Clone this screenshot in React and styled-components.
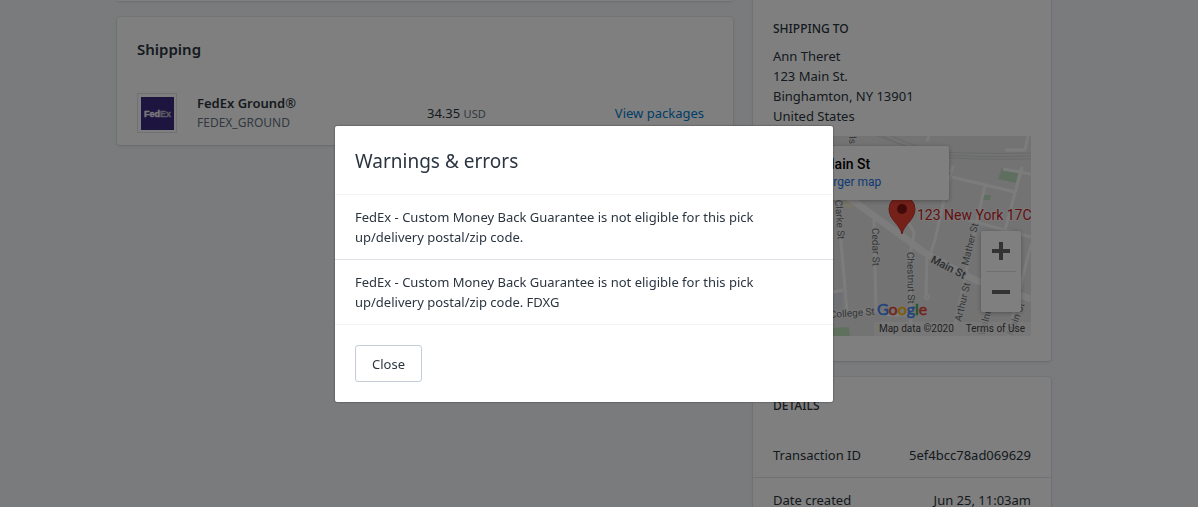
import React, { useState } from "react";
import styled, { createGlobalStyle, ThemeProvider } from "styled-components";

const theme = {
  fonts: {
    base: `"Noto Sans", "Open Sans", sans-serif`,
    map: `Roboto, "Liberation Sans", sans-serif`,
  },
  colors: {
    ink: "#2b3540",
    subdued: "#637381",
    border: "#dfe3e8",
    lightBorder: "#f1f3f6",
    page: "#f4f6f8",
    link: "#007ace",
  },
};

const warnings = [
  "FedEx - Custom Money Back Guarantee is not eligible for this pick up/delivery postal/zip code.",
  "FedEx - Custom Money Back Guarantee is not eligible for this pick up/delivery postal/zip code. FDXG",
];

const address = [
  "Ann Theret",
  "123 Main St.",
  "Binghamton, NY 13901",
  "United States",
];

const details = [
  { label: "Transaction ID", value: "5ef4bcc78ad069629" },
  { label: "Date created", value: "Jun 25, 11:03am" },
];

const roads = [
  "M62 44 L67 94 L74 176",
  "M101 82 L103 174",
  "M60 178 L102 174 Q112 182 139 178",
  "M60 156 L70 154",
  "M135 68 L135 86 L141 96 L140 106 L137 118 L138 200",
  "M180 30 L175 46 L162 104 L158 116",
  "M154 120 L153 158",
  "M179 41 L242 56",
  "M212 49 L202 94 L182 190",
  "M249 31 L232 94 L212 180",
  "M230 33 L258 38",
  "M195 84 L258 101",
  "M232 14 L252 14 L255 0",
  "M154 5 L156 0",
  "M258 108 L249 144 L235 200",
];

const streets = [
  { name: "Mills", x: 75, y: -13, angle: 86 },
  { name: "Center", x: 147, y: 43, angle: 0 },
  { name: "Clarke St", x: 62, y: 64, angle: 86 },
  { name: "Cedar St", x: 99, y: 92, angle: 89 },
  { name: "Chestnut St", x: 134, y: 116, angle: 89 },
  { name: "Mather St", x: 195, y: 130, angle: -76 },
  { name: "Arthur St", x: 188, y: 186, angle: -76 },
  { name: "College St", x: 57, y: 182, angle: -4 },
  { name: "Walnut St", x: 212, y: 200, angle: -76 },
  { name: "Main St", x: 240, y: 200, angle: -70 },
];

const StreetMap = () => (
  <MapFrame>
    <MapDrawing viewBox="0 0 258 200" preserveAspectRatio="xMinYMin slice">
      <rect width="258" height="200" fill="#e6e6e6" />
      <path d="M229 32 L245 36 L243 47 L225 43Z" fill="#bcdfbf" />
      <path d="M210 59 h8 l-1 5 h-8Z" fill="#bcdfbf" />
      <path d="M60 192 L76 191 L77 200 L60 200Z" fill="#bfe3bd" />
      <path d="M60 157 H69 V173 H60Z" fill="#dde0e6" />
      <path d="M72 62 L81 67 L78 74 L71 70Z" fill="#f3ebd0" />
      <g fill="none" stroke="#d2d4d6" strokeWidth="1">
        <path d="M100 -2 Q140 14 165 18 Q200 22 258 20" />
        <path d="M106 -2 Q142 17 165 21 Q200 24 258 23" />
        <path d="M114 -2 Q146 13 168 16 Q200 18 258 17" />
      </g>
      <g fill="none" stroke="#f9f9f9" strokeWidth="3" strokeLinejoin="round">
        {roads.map((d) => (
          <path key={d} d={d} />
        ))}
        <path
          d="M52 45 L75 61 L129 100 L152 117 L202 144 L258 163"
          strokeWidth="7"
        />
        <circle cx="154" cy="161" r="2" strokeWidth="2" fill="#e6e6e6" />
      </g>
      <g
        fontSize="10"
        fill="#6b6f73"
        stroke="#eeeeee"
        strokeWidth="2"
        paintOrder="stroke"
      >
        {streets.map(({ name, x, y, angle }) => (
          <text key={name} transform={`translate(${x} ${y}) rotate(${angle})`}>
            {name}
          </text>
        ))}
        <text
          transform="translate(157 126) rotate(27)"
          fontSize="11"
          fontWeight="500"
          fill="#5a5e62"
        >
          Main St
        </text>
      </g>
      <path
        d="M129 98 C127 88 116 84 116 73 A13 13 0 0 1 142 73 C142 84 131 88 129 98Z"
        fill="#ea4335"
        stroke="#c5362a"
      />
      <circle cx="129" cy="73" r="5" fill="#811411" />
      <text
        x="144"
        y="84"
        fontSize="14"
        fill="#c5221f"
        stroke="#f2f2f2"
        strokeWidth="2"
        paintOrder="stroke"
      >
        123 New York 17C
      </text>
      <text x="104" y="179" fontFamily="Lato" fontSize="16" strokeWidth="0.5">
        <tspan fill="#4285f4" stroke="#4285f4">G</tspan>
        <tspan fill="#ea4335" stroke="#ea4335">o</tspan>
        <tspan fill="#fbbc05" stroke="#fbbc05">o</tspan>
        <tspan fill="#4285f4" stroke="#4285f4">g</tspan>
        <tspan fill="#34a853" stroke="#34a853">l</tspan>
        <tspan fill="#ea4335" stroke="#ea4335">e</tspan>
      </text>
    </MapDrawing>
    <PlaceCard>
      <PlaceName>123 Main St</PlaceName>
      <PlaceLink href="#map">View larger map</PlaceLink>
    </PlaceCard>
    <ZoomControls>
      <ZoomButton aria-label="Zoom in">
        <svg width="18" height="18" viewBox="0 0 18 18">
          <path d="M0 9 H18 M9 0 V18" stroke="#666" strokeWidth="4" />
        </svg>
      </ZoomButton>
      <ZoomDivider />
      <ZoomButton aria-label="Zoom out">
        <svg width="18" height="18" viewBox="0 0 18 18">
          <path d="M0 9 H18" stroke="#666" strokeWidth="4" />
        </svg>
      </ZoomButton>
    </ZoomControls>
    <Attribution>
      <span>Map data ©2020</span>
      <a href="#terms">Terms of Use</a>
    </Attribution>
  </MapFrame>
);

const App = () => {
  const [open, setOpen] = useState(true);

  return (
    <ThemeProvider theme={theme}>
      <GlobalStyle />
      <Page>
        <Columns>
          <Primary>
            <Card $continued />
            <Card>
              <CardTitle>Shipping</CardTitle>
              <Shipment>
                <CarrierLogo>
                  <svg width="34" height="34" viewBox="0 0 34 34">
                    <rect x="1" y="1" width="33" height="33" fill="#3d2880" />
                    <text
                      x="4"
                      y="21"
                      fontFamily="Liberation Sans"
                      fontWeight="700"
                      fontSize="9"
                      fill="#f4f1f8"
                      stroke="#f4f1f8"
                      strokeWidth="0.4"
                    >
                      Fed
                      <tspan fill="#b9b4c4" stroke="#b9b4c4">
                        Ex
                      </tspan>
                    </text>
                  </svg>
                </CarrierLogo>
                <Service>
                  <ServiceName>FedEx Ground®</ServiceName>
                  <ServiceCode>FEDEX_GROUND</ServiceCode>
                </Service>
                <Price>
                  34.35 <small>USD</small>
                </Price>
                <PackagesLink href="#packages">View packages</PackagesLink>
              </Shipment>
            </Card>
          </Primary>
          <Secondary>
            <Card $continued>
              <AddressSection>
                <Subheading>Shipping to</Subheading>
                <Address>
                  {address.map((line) => (
                    <div key={line}>{line}</div>
                  ))}
                </Address>
                <StreetMap />
              </AddressSection>
            </Card>
            <Card>
              <DetailsHeader>
                <Subheading>Details</Subheading>
              </DetailsHeader>
              <DetailList>
                {details.map(({ label, value }) => (
                  <DetailRow key={label}>
                    <dt>{label}</dt>
                    <dd>{value}</dd>
                  </DetailRow>
                ))}
              </DetailList>
            </Card>
          </Secondary>
        </Columns>
      </Page>
      {open && (
        <Backdrop>
          <Modal role="dialog" aria-modal="true" aria-labelledby="modal-title">
            <ModalHeader>
              <ModalTitle id="modal-title">Warnings &amp; errors</ModalTitle>
            </ModalHeader>
            <WarningList>
              {warnings.map((text) => (
                <Warning key={text}>{text}</Warning>
              ))}
            </WarningList>
            <ModalFooter>
              <CloseButton onClick={() => setOpen(false)}>Close</CloseButton>
            </ModalFooter>
          </Modal>
        </Backdrop>
      )}
    </ThemeProvider>
  );
};

export default App;

const GlobalStyle = createGlobalStyle`
  * {
    box-sizing: border-box;
  }
  body {
    margin: 0;
    overflow: hidden;
    color: ${({ theme }) => theme.colors.ink};
    background-color: ${({ theme }) => theme.colors.page};
    font-family: ${({ theme }) => theme.fonts.base};
    font-size: 13px;
    line-height: 20px;
  }
  h1, h2, h3, ul, dl, dd {
    margin: 0;
    padding: 0;
  }
`;

const Page = styled.main`
  height: 100vh;
  padding-right: 30px;
  overflow: hidden;
`;

const Columns = styled.div`
  max-width: 934px;
  margin: 0 auto;
  display: flex;
  align-items: flex-start;
  gap: 20px;
`;

const Primary = styled.div`
  flex: 1;
  display: flex;
  flex-direction: column;
  gap: 16px;
`;

const Secondary = styled.div`
  flex: 0 0 298px;
  display: flex;
  flex-direction: column;
  gap: 16px;
`;

const Card = styled.section`
  min-height: 1px;
  background-color: white;
  border-radius: ${({ $continued }) => ($continued ? "0 0 3px 3px" : "3px")};
  box-shadow: 0 0 0 1px rgba(63, 63, 68, 0.05),
    0 1px 3px 0 rgba(63, 63, 68, 0.15);
`;

const CardTitle = styled.h2`
  padding: 20px 20px 0;
  font-size: 15px;
  font-weight: 600;
  line-height: 24px;
`;

const Shipment = styled.div`
  padding: 32px 29px 12px 20px;
  display: grid;
  grid-template-columns: 40px 210px 1fr auto;
  column-gap: 20px;
  align-items: center;
`;

const CarrierLogo = styled.div`
  height: 40px;
  display: flex;
  align-items: center;
  justify-content: center;
  border: 1px solid ${({ theme }) => theme.colors.border};
`;

const Service = styled.div`
  display: flex;
  flex-direction: column;
`;

const ServiceName = styled.span`
  font-weight: 600;
`;

const ServiceCode = styled.span`
  color: ${({ theme }) => theme.colors.subdued};
  font-size: 12px;
`;

const Price = styled.div`
  small {
    color: ${({ theme }) => theme.colors.subdued};
    font-size: 11px;
  }
`;

const PackagesLink = styled.a`
  color: ${({ theme }) => theme.colors.link};
  text-decoration: none;
`;

const AddressSection = styled.div`
  padding: 20px 20px 25px;
`;

const Subheading = styled.h3`
  font-size: 12px;
  font-weight: 500;
  line-height: 18px;
  text-transform: uppercase;
`;

const Address = styled.div`
  padding: 8px 0 10px;
`;

const MapFrame = styled.div`
  position: relative;
  height: 200px;
  overflow: hidden;
  font-family: ${({ theme }) => theme.fonts.map};
`;

const MapDrawing = styled.svg`
  display: block;
  width: 100%;
  height: 100%;
`;

const PlaceCard = styled.div`
  position: absolute;
  top: 10px;
  left: 10px;
  width: 166px;
  padding: 9px 12px;
  display: flex;
  flex-direction: column;
  line-height: 18px;
  background-color: white;
  border-radius: 2px;
  box-shadow: 0 1px 4px rgba(0, 0, 0, 0.3);
`;

const PlaceName = styled.span`
  color: black;
  font-size: 14px;
  font-weight: 500;
`;

const PlaceLink = styled.a`
  color: #1a73e8;
  font-size: 12px;
  text-decoration: none;
`;

const ZoomControls = styled.div`
  position: absolute;
  top: 95px;
  right: 10px;
  width: 40px;
  background-color: white;
  border-radius: 2px;
  box-shadow: 0 1px 4px rgba(0, 0, 0, 0.3);
`;

const ZoomButton = styled.button`
  width: 100%;
  height: 40px;
  padding: 0;
  display: flex;
  align-items: center;
  justify-content: center;
  border: 0;
  background: none;
  cursor: pointer;
`;

const ZoomDivider = styled.div`
  height: 1px;
  margin: 0 5px;
  background-color: #e0e0e0;
`;

const Attribution = styled.div`
  position: absolute;
  right: 0;
  bottom: 0;
  padding: 0 6px 0 5px;
  display: flex;
  gap: 12px;
  color: #444;
  font-size: 10px;
  line-height: 14px;
  background-color: rgba(245, 245, 245, 0.7);
  a {
    color: inherit;
    text-decoration: none;
  }
`;

const DetailsHeader = styled.div`
  padding: 20px 20px 18px;
`;

const DetailList = styled.dl``;

const DetailRow = styled.div`
  padding: 12px 20px;
  display: flex;
  justify-content: space-between;
  border-bottom: 1px solid ${({ theme }) => theme.colors.border};
`;

const Backdrop = styled.div`
  position: fixed;
  inset: 0;
  padding: 21px 30px 0 0;
  display: flex;
  align-items: center;
  justify-content: center;
  background-color: rgba(0, 0, 0, 0.5);
`;

const Modal = styled.div`
  width: 100%;
  max-width: 498px;
  background-color: white;
  border-radius: 2px;
  box-shadow: 0 0 2px rgba(0, 0, 0, 0.6);
`;

const ModalHeader = styled.div`
  padding: 20px 20px 18px;
  border-bottom: 1px solid ${({ theme }) => theme.colors.lightBorder};
`;

const ModalTitle = styled.h1`
  font-size: 19px;
  font-weight: 400;
  line-height: 30px;
`;

const WarningList = styled.ul`
  list-style: none;
`;

const Warning = styled.li`
  padding: 12px 20px;
  border-bottom: 1px solid ${({ theme }) => theme.colors.border};
  &:last-child {
    border-color: ${({ theme }) => theme.colors.lightBorder};
  }
`;

const ModalFooter = styled.div`
  padding: 20px;
  display: flex;
`;

const CloseButton = styled.button`
  height: 37px;
  padding: 0 16px;
  color: ${({ theme }) => theme.colors.ink};
  font-family: inherit;
  font-size: 13px;
  background-color: white;
  border: 1px solid #c4cdd5;
  border-radius: 3px;
  cursor: pointer;
`;
